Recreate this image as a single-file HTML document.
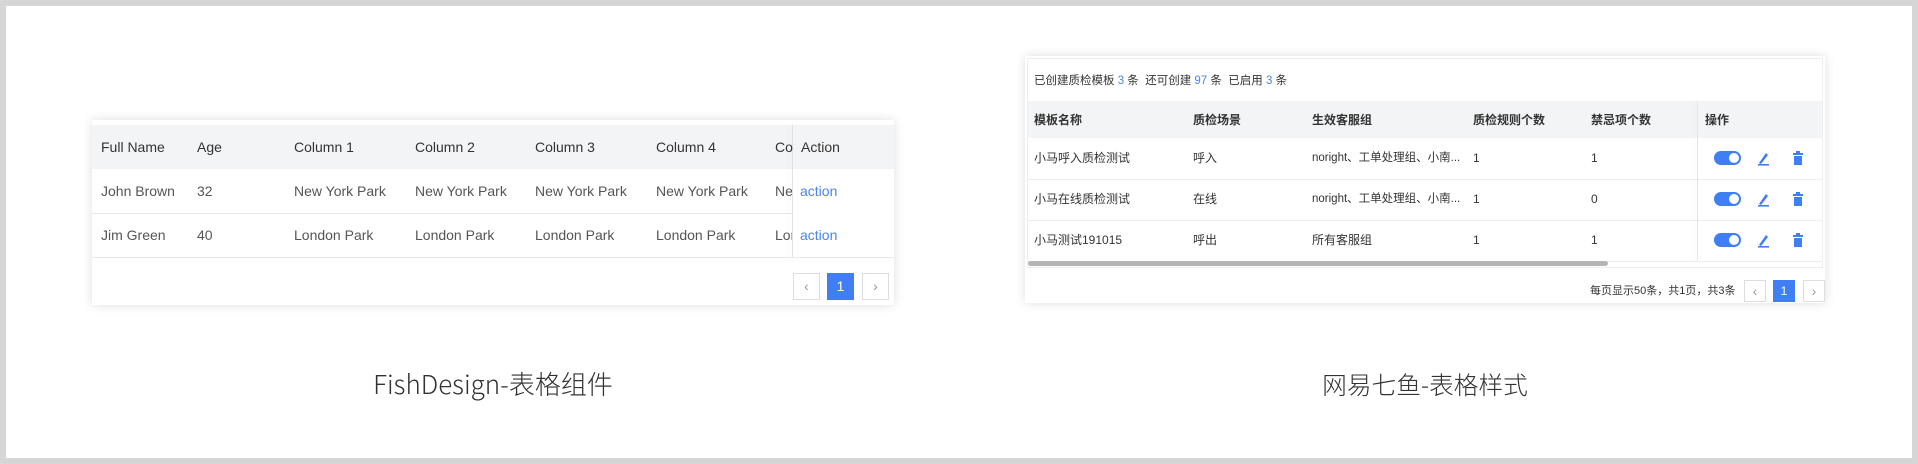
<!DOCTYPE html>
<html><head><meta charset="utf-8"><style>
*{box-sizing:border-box;margin:0;padding:0}
body{width:1918px;height:464px;background:#d6d6d6;position:relative;overflow:hidden;font-family:"Liberation Sans","Noto Sans CJK SC",sans-serif}
.frame{position:absolute;left:6px;top:6px;width:1906px;height:452px;background:#fff}
.abs{position:absolute;white-space:nowrap}
.card{position:absolute;background:#fff;box-shadow:0 0 10px rgba(0,0,0,.13)}
.l{font-size:14px;color:#333;line-height:18px}
.r{font-size:12px;color:#333;line-height:16px;height:16px}
.r span{line-height:16px}
.btn{position:absolute;border:1px solid #ddd;background:#fff;color:#999;text-align:center;font-size:14px}
.cur{background:#3f7ff3;border-color:#3f7ff3;color:#fff}
.blue{color:#4a84ee}
.cap{font-family:"Noto Sans CJK SC","Liberation Sans",sans-serif;font-weight:300;color:#333}
</style></head><body>
<div class="frame"></div>

<!-- Left card -->
<div class="card" style="left:92px;top:120px;width:802px;height:185px">
  <div class="abs" style="left:0;top:5px;width:802px;height:44px;background:#f3f4f6"></div>
  <div class="abs" style="left:0;top:93px;width:802px;height:1px;background:#e8e8e8"></div>
  <div class="abs" style="left:0;top:137px;width:802px;height:1px;background:#e8e8e8"></div>
  <div class="abs" style="left:700px;top:5px;width:1px;height:132px;background:#e2e2e2;box-shadow:-3px 0 5px rgba(0,0,0,.06)"></div>
  <div class="abs" style="left:701px;top:49px;width:101px;height:88px;background:#fff"></div>
</div>
<div class="abs l" style="left:101px;top:138px">Full Name</div>
<div class="abs l" style="left:197px;top:138px">Age</div>
<div class="abs l" style="left:294px;top:138px">Column 1</div>
<div class="abs l" style="left:415px;top:138px">Column 2</div>
<div class="abs l" style="left:535px;top:138px">Column 3</div>
<div class="abs l" style="left:656px;top:138px">Column 4</div>
<div class="abs l" style="left:775px;top:138px">Co</div>
<div class="abs l" style="left:801px;top:138px">Action</div>
<div class="abs l" style="left:101px;top:182px;color:#555">John Brown</div>
<div class="abs l" style="left:197px;top:182px;color:#555">32</div>
<div class="abs l" style="left:294px;top:182px;color:#555">New York Park</div>
<div class="abs l" style="left:415px;top:182px;color:#555">New York Park</div>
<div class="abs l" style="left:535px;top:182px;color:#555">New York Park</div>
<div class="abs l" style="left:656px;top:182px;color:#555">New York Park</div>
<div class="abs l" style="left:775px;top:182px;color:#555;width:17px;overflow:hidden">New</div>
<div class="abs l blue" style="left:800px;top:182px">action</div>
<div class="abs l" style="left:101px;top:226px;color:#555">Jim Green</div>
<div class="abs l" style="left:197px;top:226px;color:#555">40</div>
<div class="abs l" style="left:294px;top:226px;color:#555">London Park</div>
<div class="abs l" style="left:415px;top:226px;color:#555">London Park</div>
<div class="abs l" style="left:535px;top:226px;color:#555">London Park</div>
<div class="abs l" style="left:656px;top:226px;color:#555">London Park</div>
<div class="abs l" style="left:775px;top:226px;color:#555;width:17px;overflow:hidden">Lon</div>
<div class="abs l blue" style="left:800px;top:226px">action</div>
<div class="btn" style="left:793px;top:273px;width:27px;height:27px;line-height:25px">&lsaquo;</div>
<div class="btn cur" style="left:827px;top:273px;width:27px;height:27px;line-height:25px">1</div>
<div class="btn" style="left:862px;top:273px;width:27px;height:27px;line-height:25px">&rsaquo;</div>
<div class="abs cap" style="left:493px;top:365px;transform:translateX(-50%);font-size:26px">FishDesign-表格组件</div>

<!-- Right card -->
<div class="card" style="left:1025px;top:56px;width:800px;height:247px">
  <div class="abs" style="left:2px;top:2px;width:796px;height:210px;border:1px solid #eee"></div>
  <div class="abs" style="left:3px;top:45px;width:794px;height:37px;background:#f3f4f6"></div>
  <div class="abs" style="left:3px;top:123px;width:794px;height:1px;background:#eee"></div>
  <div class="abs" style="left:3px;top:164px;width:794px;height:1px;background:#eee"></div>
  <div class="abs" style="left:3px;top:205px;width:794px;height:1px;background:#eee"></div>
  <div class="abs" style="left:672px;top:45px;width:1px;height:160px;background:#e4e4e4;box-shadow:-3px 0 5px rgba(0,0,0,.06)"></div>
  <div class="abs" style="left:3px;top:205px;width:580px;height:5px;background:#b5b5b5;border-radius:3px"></div>
</div>
<div class="abs r" style="left:1034px;top:73px;font-size:11.5px">已创建质检模板 <span class="blue">3</span> 条&nbsp;&nbsp;还可创建 <span class="blue">97</span> 条&nbsp;&nbsp;已启用 <span class="blue">3</span> 条</div>
<div class="abs r" style="left:1034px;top:112px;font-weight:bold">模板名称</div>
<div class="abs r" style="left:1193px;top:112px;font-weight:bold">质检场景</div>
<div class="abs r" style="left:1312px;top:112px;font-weight:bold">生效客服组</div>
<div class="abs r" style="left:1473px;top:112px;font-weight:bold">质检规则个数</div>
<div class="abs r" style="left:1591px;top:112px;font-weight:bold">禁忌项个数</div>
<div class="abs r" style="left:1705px;top:112px;font-weight:bold">操作</div>

<div class="abs r" style="left:1034px;top:150px">小马呼入质检测试</div>
<div class="abs r" style="left:1193px;top:150px">呼入</div>
<div class="abs r" style="left:1312px;top:150px;font-size:11.5px">noright、工单处理组、小南...</div>
<div class="abs r" style="left:1473px;top:150px">1</div>
<div class="abs r" style="left:1591px;top:150px">1</div>
<div class="abs r" style="left:1034px;top:191px">小马在线质检测试</div>
<div class="abs r" style="left:1193px;top:191px">在线</div>
<div class="abs r" style="left:1312px;top:191px;font-size:11.5px">noright、工单处理组、小南...</div>
<div class="abs r" style="left:1473px;top:191px">1</div>
<div class="abs r" style="left:1591px;top:191px">0</div>
<div class="abs r" style="left:1034px;top:232px">小马测试191015</div>
<div class="abs r" style="left:1193px;top:232px">呼出</div>
<div class="abs r" style="left:1312px;top:232px">所有客服组</div>
<div class="abs r" style="left:1473px;top:232px">1</div>
<div class="abs r" style="left:1591px;top:232px">1</div>

<!-- action icons -->
<svg class="abs" style="left:1710px;top:147px" width="110" height="110" viewBox="0 0 110 110">
  <g id="ic">
    <rect x="4" y="4" width="27" height="14" rx="7" fill="#3f7ff3"/>
    <circle cx="24" cy="11" r="5" fill="#fff"/>
    <path d="M49 16 L56 6 L58 8 L51 17 Z" fill="#3f7ff3"/><rect x="48" y="17" width="11" height="1.6" fill="#3f7ff3"/>
    <rect x="83" y="6" width="10" height="2" fill="#3f7ff3"/><rect x="86" y="4" width="4" height="2" fill="#3f7ff3"/>
    <rect x="84" y="9" width="8" height="9" fill="#3f7ff3"/>
  </g>
  <use href="#ic" y="41"/>
  <use href="#ic" y="82"/>
</svg>

<div class="abs r" style="left:1590px;top:283px;font-size:11px">每页显示50条，共1页，共3条</div>
<div class="btn" style="left:1744px;top:280px;width:22px;height:22px;line-height:20px">&lsaquo;</div>
<div class="btn cur" style="left:1773px;top:280px;width:22px;height:22px;line-height:20px;font-size:12px">1</div>
<div class="btn" style="left:1803px;top:280px;width:22px;height:22px;line-height:20px">&rsaquo;</div>
<div class="abs cap" style="left:1425px;top:366px;transform:translateX(-50%);font-size:24.7px">网易七鱼-表格样式</div>
</body></html>
